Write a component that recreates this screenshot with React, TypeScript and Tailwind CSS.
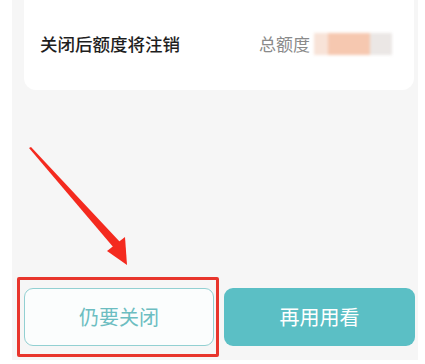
export default function App() {
	return (
		<div
			className="h-[364px] w-[425px] overflow-hidden bg-white"
			style={{ fontFamily: '"Noto Sans CJK SC", "Noto Sans", sans-serif' }}
		>
			<div className="relative ml-[12px] flex h-[360px] w-[406px] flex-col bg-[#f6f6f6]">
				{/* card, top cut off by the screenshot */}
				<div className="ml-[12px] flex h-[90px] w-[390px] items-center justify-between rounded-b-[12px] bg-white pb-[2px] pl-[16px] pr-[22px]">
					<span className="text-[17.5px] font-medium text-[#1e1e1e]">关闭后额度将注销</span>
					<div className="flex items-center">
						<span className="text-[17px] text-[#8a8a8a]">总额度</span>
						<div className="ml-[4px] flex h-[22px] w-[78px] overflow-hidden blur-[1.5px]">
							<div className="w-[14px] bg-[#f8e3d8]" />
							<div className="w-[42px] bg-[#f6c8b0]" />
							<div className="flex-1 bg-[#ebe7e5]" />
						</div>
					</div>
				</div>

				<div className="mt-auto mb-[14px] flex gap-[10px] pl-[12px]">
					<button className="flex h-[58px] w-[190px] items-center justify-center rounded-[9px] border border-[#92d0d2] bg-[#fbfdfd] text-[20px] text-[#6cbdc1]">
						仍要关闭
					</button>
					<button className="flex h-[58px] w-[191px] items-center justify-center rounded-[9px] bg-[#5bbfc5] text-[20px] text-white">
						再用用看
					</button>
				</div>

				{/* red highlight box */}
				<div className="pointer-events-none absolute left-[5px] top-[277px] h-[80px] w-[202px] rounded-[2px] border-[3px] border-[#e8352c]" />

				{/* red arrow */}
				<svg className="pointer-events-none absolute left-0 top-0" width="406" height="360" viewBox="0 0 406 360">
					<polygon points="17,148 19,147 108,242 102,248" fill="#f42a1f" />
					<polygon points="95,251 113,237 115,265" fill="#f42a1f" />
				</svg>
			</div>
		</div>
	);
}
